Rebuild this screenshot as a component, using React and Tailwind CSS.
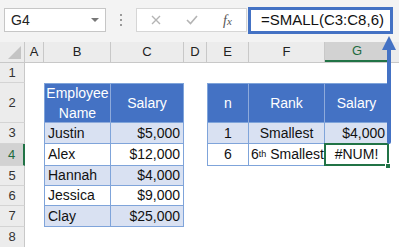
import React from "react";

const cols = [
  { id: "A", w: 19 },
  { id: "B", w: 67 },
  { id: "C", w: 73 },
  { id: "D", w: 23 },
  { id: "E", w: 42 },
  { id: "F", w: 76 },
  { id: "G", w: 65 },
];

const rowHeights = [20, 40, 21, 22, 20, 20, 21, 21];

const left = [
  ["Justin", "$5,000"],
  ["Alex", "$12,000"],
  ["Hannah", "$4,000"],
  ["Jessica", "$9,000"],
  ["Clay", "$25,000"],
];

const Cell = ({ w, className = "", children }) => (
  <div className={`shrink-0 h-full flex items-center ${className}`} style={{ width: w }}>
    {children}
  </div>
);

const RowHeader = ({ n, active }) => (
  <div
    className={`w-[25px] shrink-0 h-full flex items-center justify-center text-[13px] border-b border-[#d4d4d4] ${
      active ? "bg-[#d2d2d2] text-[#1e6b3f] border-r-2 border-r-[#217346]" : "bg-[#ececec] text-[#333] border-r border-r-[#c8c8c8]"
    }`}
  >
    {n}
  </div>
);

const App = () => {
  const bl = "border-[#7fa4da]";

  const rowContent = (i) => {
    // i is 0-based row index (row number i+1)
    const r = i + 1;
    if (r === 1 || r === 8) return null;
    if (r === 2) {
      return (
        <>
          <Cell w={19} />
          <Cell w={67} className="bg-[#4472c4] text-white justify-center text-center leading-[20px] border-l border-t border-r border-b border-[#8eaadb] border-l-[#7fa4da] border-t-[#7fa4da]">
            Employee<br />Name
          </Cell>
          <Cell w={73} className="bg-[#4472c4] text-white justify-center border-t border-r border-b border-[#7fa4da]">
            Salary
          </Cell>
          <Cell w={23} />
          <Cell w={42} className="bg-[#4472c4] text-white justify-center border-l border-t border-r border-b border-[#7fa4da] border-r-[#8eaadb]">
            n
          </Cell>
          <Cell w={76} className="bg-[#4472c4] text-white justify-center border-t border-r border-b border-[#7fa4da] border-r-[#8eaadb]">
            Rank
          </Cell>
          <Cell w={63} className="bg-[#4472c4] text-white justify-center border-t border-b border-[#7fa4da]">
            Salary
          </Cell>
        </>
      );
    }
    const d = left[r - 3];
    const band = r % 2 === 1 ? "bg-[#d9e1f2]" : "bg-white";
    return (
      <>
        <Cell w={19} />
        <Cell w={67} className={`${band} pl-[3px] border-l border-r border-b ${bl}`}>
          {d[0]}
        </Cell>
        <Cell w={73} className={`${band} justify-end pr-[3px] border-r border-b ${bl}`}>
          {d[1]}
        </Cell>
        <Cell w={23} />
        {r === 3 && (
          <>
            <Cell w={42} className={`bg-[#d9e1f2] justify-center border-l border-r border-b ${bl}`}>1</Cell>
            <Cell w={76} className={`bg-[#d9e1f2] justify-center border-r border-b ${bl}`}>Smallest</Cell>
            <Cell w={63} className={`bg-[#d9e1f2] justify-end pr-[3px] border-b ${bl}`}>$4,000</Cell>
          </>
        )}
        {r === 4 && (
          <>
            <Cell w={42} className={`bg-white justify-center border-l border-r border-b ${bl}`}>6</Cell>
            <Cell w={76} className={`bg-white justify-start pl-[2px] border-b ${bl}`}>
              <span>
                6<sup className="text-[9px] relative -top-[2px]">th</sup> Smallest
              </span>
            </Cell>
            <div className="relative w-[65px] h-full shrink-0">
              <div className="absolute -left-[1px] -top-[1px] right-[1px] bottom-0 border-2 border-[#217346] bg-white flex items-center justify-center">
                #NUM!
              </div>
              <div className="absolute -right-[1px] -bottom-[3px] w-[6px] h-[6px] bg-[#217346] border border-white" />
            </div>
          </>
        )}
      </>
    );
  };

  return (
    <div className="relative w-[399px] h-[247px] overflow-hidden bg-white text-[#111] text-[14px]" style={{ fontFamily: '"Liberation Sans", Arial, sans-serif' }}>
      {/* formula bar */}
      <div className="h-[42px] bg-[#f3f3f3] flex items-center pl-[4px]">
        <div className="w-[102px] h-[24px] bg-white border border-[#c6c6c6] flex items-center justify-between pl-[6px] pr-[6px] -mt-[2px]">
          <span className="text-[14px] text-[#222]">G4</span>
          <svg width="8" height="5" viewBox="0 0 8 5"><path d="M0 0h8L4 4z" fill="#777" /></svg>
        </div>
        <div className="w-[30px] flex flex-col items-center gap-[3px] -mt-[2px]">
          <span className="w-[2px] h-[2px] bg-[#9a9a9a]" />
          <span className="w-[2px] h-[2px] bg-[#9a9a9a]" />
          <span className="w-[2px] h-[2px] bg-[#9a9a9a]" />
        </div>
        <div className="w-[111px] h-[24px] bg-white border border-[#d6d6d6] flex items-center -mt-[2px]">
          <svg className="ml-[14px]" width="10" height="10" viewBox="0 0 10 10"><path d="M1 1l8 8M9 1l-8 8" stroke="#b4b4b4" strokeWidth="1.4" /></svg>
          <svg className="ml-[25px]" width="12" height="10" viewBox="0 0 12 10"><path d="M1 5l3.5 3.5L11 1" stroke="#b4b4b4" strokeWidth="1.6" fill="none" /></svg>
          <span className="ml-[25px] text-[#555] italic text-[14px]" style={{ fontFamily: '"Liberation Serif", serif' }}>
            f<span className="text-[11px]">x</span>
          </span>
        </div>
        <div className="ml-[1px] w-[145px] h-[27px] bg-white border-[3px] border-[#4472c4] flex items-center pl-[10px] -mt-[2px]">
          <span className="text-[15px] text-[#111]">=SMALL(C3:C8,6)</span>
        </div>
      </div>

      {/* column headers */}
      <div className="h-[21px] flex bg-[#ececec] border-b border-[#c8c8c8]">
        <div className="w-[25px] shrink-0 h-full border-r border-[#c8c8c8] flex items-end justify-end pr-[3px] pb-[3px]">
          <svg width="13" height="13" viewBox="0 0 13 13"><path d="M13 0V13H0z" fill="#c4c4c4" /></svg>
        </div>
        {cols.map((c) => (
          <div
            key={c.id}
            className={`shrink-0 h-full flex items-center justify-center text-[13px] border-r border-[#c8c8c8] ${
              c.id === "G" ? "bg-[#d2d2d2] text-[#1e6b3f] border-b-2 border-b-[#217346]" : "text-[#222]"
            }`}
            style={{ width: c.w }}
          >
            {c.id}
          </div>
        ))}
        <div className="flex-1" />
      </div>

      {/* rows */}
      {rowHeights.map((h, i) => (
        <div key={i} className="flex" style={{ height: h }}>
          <RowHeader n={i + 1} active={i === 3} />
          {rowContent(i)}
        </div>
      ))}

      {/* arrow annotation */}
      <svg className="absolute left-[379px] top-[34px]" width="20" height="112" viewBox="0 0 20 112">
        <path d="M10 14V108" stroke="#4472c4" strokeWidth="4" strokeLinecap="round" />
        <path d="M10 2L3 16h14z" fill="#4472c4" />
      </svg>
    </div>
  );
};

export default App;
